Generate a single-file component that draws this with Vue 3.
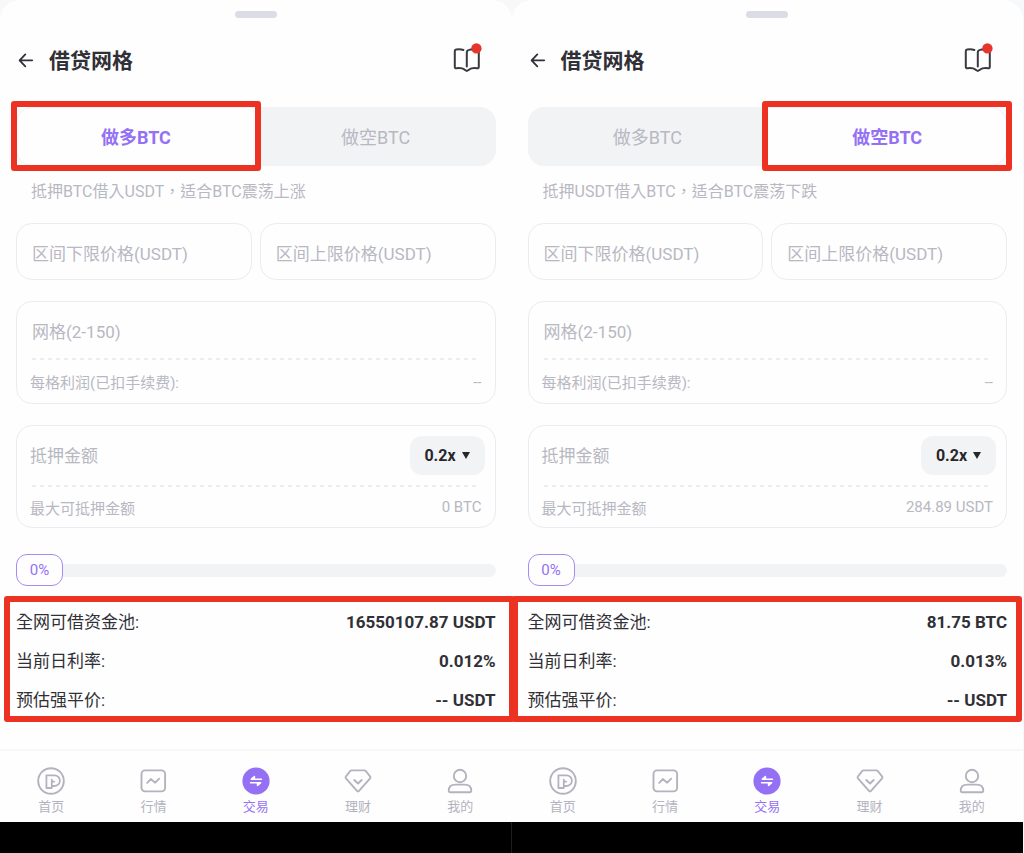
<script setup>
import { ref } from 'vue'

const tabs = ['做多BTC', '做空BTC']
const nav = [
  { id: 'home', label: '首页' },
  { id: 'market', label: '行情' },
  { id: 'trade', label: '交易' },
  { id: 'wealth', label: '理财' },
  { id: 'me', label: '我的' },
]
const panels = ref([
  {
    id: 'long', active: 0, percent: 0,
    hint: '抵押BTC借入USDT，适合BTC震荡上涨',
    max: '0 BTC',
    stats: [['全网可借资金池:', '16550107.87 USDT'], ['当前日利率:', '0.012%'], ['预估强平价:', '-- USDT']],
  },
  {
    id: 'short', active: 1, percent: 0,
    hint: '抵押USDT借入BTC，适合BTC震荡下跌',
    max: '284.89 USDT',
    stats: [['全网可借资金池:', '81.75 BTC'], ['当前日利率:', '0.013%'], ['预估强平价:', '-- USDT']],
  },
])
</script>

<template>
  <div class="board">
    <section v-for="p in panels" :key="p.id" class="phone" :class="p.id">
      <div class="sheet">
        <div class="handle"></div>
        <header class="head">
          <button class="icon-btn" aria-label="返回">
            <svg width="16" height="16" viewBox="0 0 16 16" fill="none" stroke="#303036" stroke-width="1.8" stroke-linecap="round" stroke-linejoin="round">
              <path d="M14.2 7.3H2M7.3 1.4 1.6 7.3l5.7 6" />
            </svg>
          </button>
          <h1>借贷网格</h1>
          <button class="icon-btn guide" aria-label="教程">
            <svg width="30" height="32" viewBox="0 0 30 32" fill="none" stroke="#3a3a40" stroke-width="2" stroke-linejoin="round" stroke-linecap="round">
              <path d="M11.4 8C9.2 7.2 6.6 7.1 4.2 7.5 3.2 7.7 2.8 8.2 2.8 9.1v15.7c0 1.1.6 1.6 1.6 1.4 3.6-.5 6.2-.2 8 1.4l2.4 1.4 2.4-1.4c1.8-1.6 4.4-1.9 8-1.4 1 .2 1.6-.3 1.6-1.4V9.1M14.8 24.6V10.4c0-1.5.9-2.1 2.3-2.5 1.6-.5 3.2-.6 5-.5" />
              <circle cx="24.4" cy="6.4" r="5.2" fill="#e5352c" stroke="none" />
            </svg>
          </button>
        </header>

        <div class="tabs" role="tablist">
          <button
            v-for="(t, i) in tabs" :key="t" role="tab" class="tab"
            :class="{ active: p.active === i }" :aria-selected="p.active === i"
            @click="p.active = i"
          >
            {{ t }}
          </button>
        </div>
        <p class="hint">{{ p.hint }}</p>

        <div class="range">
          <input class="box" aria-label="区间下限价格" placeholder="区间下限价格(USDT)">
          <input class="box" aria-label="区间上限价格" placeholder="区间上限价格(USDT)">
        </div>

        <div class="card">
          <div class="row-main"><input class="plain" aria-label="网格数量" placeholder="网格(2-150)"></div>
          <svg class="dash" height="2"><line x1="0" y1="1" x2="100%" y2="1" /></svg>
          <div class="row-sub"><span>每格利润(已扣手续费):</span><span>--</span></div>
        </div>

        <div class="card pledge">
          <div class="row-main">
            <input class="plain" aria-label="抵押金额" placeholder="抵押金额">
            <button class="lever">0.2x
              <svg width="8" height="7" viewBox="0 0 8 7"><path d="M0 0h8L4 7z" fill="#26262b" /></svg>
            </button>
          </div>
          <svg class="dash" height="2"><line x1="0" y1="1" x2="100%" y2="1" /></svg>
          <div class="row-sub"><span>最大可抵押金额</span><span>{{ p.max }}</span></div>
        </div>

        <div class="slider">
          <input v-model="p.percent" type="range" min="0" max="100" aria-label="抵押比例">
          <output>{{ p.percent }}%</output>
        </div>

        <dl class="stats">
          <div v-for="s in p.stats" :key="s[0]"><dt>{{ s[0] }}</dt><dd>{{ s[1] }}</dd></div>
        </dl>
      </div>

      <nav class="nav">
        <a v-for="n in nav" :key="n.id" href="#" :class="{ on: n.id === 'trade' }">
          <svg width="28" height="28" viewBox="0 0 28 28" fill="none" stroke="currentColor" stroke-width="1.9" stroke-linejoin="round" stroke-linecap="round">
            <template v-if="n.id === 'home'">
              <circle cx="14" cy="14" r="12.8" />
              <path d="M9.4 8.4h8.2a5.3 5.3 0 0 1 0 10.6h-2.8v2H9.4zM14.8 18.6v-6M14.8 14.6h2.4" stroke-width="1.8" />
            </template>
            <template v-else-if="n.id === 'market'">
              <rect x="2.5" y="3.4" width="23.6" height="21" rx="3.6" />
              <path d="m8.2 15.8 3.6-3.7 4.4 3.6 4-4" />
            </template>
            <template v-else-if="n.id === 'trade'">
              <circle cx="14" cy="14" r="13.6" fill="currentColor" stroke="none" />
              <path d="M19.4 12.2H9.4l3-2.6v2.6M8.6 15.7h10l-3 2.6v-2.6" fill="#fff" stroke="#fff" stroke-width="1.6" />
            </template>
            <template v-else-if="n.id === 'wealth'">
              <path d="M7.6 3.4h12.8c.6 0 1 .2 1.4.6l4.4 5.7c.4.6.3 1.1-.1 1.6L15 23.8c-.7.8-1.3.8-2 0L1.9 11.3c-.4-.5-.5-1-.1-1.6L6.2 4c.4-.4.8-.6 1.4-.6zM10.3 13l3.7 3.5 3.7-3.5" />
            </template>
            <template v-else>
              <circle cx="14" cy="9" r="6.2" />
              <path d="M2.7 23.8c0-4.3 3-6.2 6.6-6.2h9.4c3.6 0 6.6 1.9 6.6 6.2 0 .9-.4 1.4-1.3 1.4H4c-.9 0-1.3-.5-1.3-1.4z" />
            </template>
          </svg>
          <span>{{ n.label }}</span>
        </a>
      </nav>
      <div class="system-bar"></div>
    </section>
  </div>
</template>

<style>
body { background: #000; }
</style>

<style scoped>
* { box-sizing: border-box; }
.board {
  display: grid;
  grid-template-columns: 1fr 1fr;
  padding-right: 1px;
  font-family: Roboto, "Noto Sans CJK TC", sans-serif;
  color: #303036;
  background: #f7f8fa;
}
button, input { font: inherit; color: inherit; border: 0; background: none; padding: 0; margin: 0; min-width: 0; outline: 0; }
.sheet {
  padding: 11px 16px 29px;
  background: #fefefe;
  border-radius: 20px 20px 0 0;
}
.handle { width: 42px; height: 7px; margin: 0 auto; border-radius: 4px; background: #dcdce5; }
.head { display: flex; align-items: center; height: 40px; margin-top: 23px; }
.icon-btn { display: flex; margin-left: 2px; }
.head h1 { margin: 0 auto 0 15px; font-size: 21px; line-height: 30px; font-weight: 700; }
.guide { margin: 0 14px 6px 0; }
.tabs {
  display: grid;
  grid-template-columns: 1fr 1fr;
  height: 59px;
  margin-top: 26px;
  border-radius: 16px;
  background: #f2f3f5;
}
.tab { padding-bottom: 1px; font-size: 18px; color: #b8b8c2; }
.tab.active { position: relative; font-weight: 700; color: #9470f5; background: #fefefe; border: 1px solid #f2f3f5; }
.tab.active:first-child { border-radius: 16px 0 0 16px; }
.tab.active:last-child { border-radius: 0 16px 16px 0; }
.tab.active::after { content: ""; position: absolute; inset: -7px -6px -6px; border: 6px solid #ec3223; border-radius: 3px; }
.hint { margin: 14px 0 0 15px; font-size: 16px; line-height: 24px; color: #b8b8c2; white-space: nowrap; }
.range { display: grid; grid-template-columns: 1fr 1fr; gap: 8px; margin-top: 19px; }
input::placeholder { color: #b8b8c2; opacity: 1; }
.box { height: 57px; padding: 4px 15px 0; font-size: 17px; border: 1px solid #ececf0; border-radius: 16px; }
.card { height: 103px; margin-top: 21px; border: 1px solid #ececf0; border-radius: 16px; padding: 0 13px; }
.row-main { display: flex; align-items: center; height: 56px; }
.plain { flex: 1; height: 40px; font-size: 17px; padding: 4px 2px 0; }
.dash { display: block; width: calc(100% - 4px); margin: 0 2px; }
.dash line { stroke: #dcdce3; stroke-width: 1; stroke-dasharray: 4 4; }
.pledge .row-main { height: 59px; }
.pledge .plain { padding: 0; }
.pledge .row-sub { height: 40px; }
.lever { display: flex; align-items: center; justify-content: center; gap: 6px; width: 75px; height: 39px; margin-right: -3px; border-radius: 12px; background: #f2f3f5; font-size: 16px; font-weight: 700; color: #26262b; }
.row-sub { display: flex; justify-content: space-between; align-items: center; height: 43px; font-size: 15px; color: #b8b8c2; }
.slider { position: relative; display: flex; align-items: center; height: 32px; margin-top: 26px; }
.slider input { width: 100%; height: 13px; appearance: none; background: #f2f3f5; border-radius: 7px; }
.slider input::-webkit-slider-thumb { appearance: none; width: 47px; height: 32px; }
.slider output { position: absolute; left: 0; display: flex; align-items: center; justify-content: center; width: 47px; height: 32px; border: 1px solid #a98af5; border-radius: 11px; background: #fefefe; color: #9470f5; font-size: 15px; pointer-events: none; }
.stats { position: relative; margin: 17px 0 0; font-size: 17px; line-height: 39px; }
.stats::after { content: ""; position: absolute; inset: -7px -19px -2px -12px; border: 6px solid #ec3223; border-radius: 3px; }
.short .stats::after { left: -16px; right: -15px; }
.stats div { display: flex; justify-content: space-between; }
.stats dd { margin: 0; font-weight: 700; }
.nav { display: grid; grid-template-columns: repeat(5, 1fr); height: 73px; padding-top: 16px; background: #fefefe; border-top: 2px solid #f7f7f9; }
.nav a { display: flex; flex-direction: column; align-items: center; color: #b3b3be; text-decoration: none; font-size: 13px; line-height: 24px; }
.nav a.on { color: #9470f5; }
.system-bar { height: 31px; background: #000; }
.long .system-bar { border-right: 1px solid #1e1e1e; }
</style>
